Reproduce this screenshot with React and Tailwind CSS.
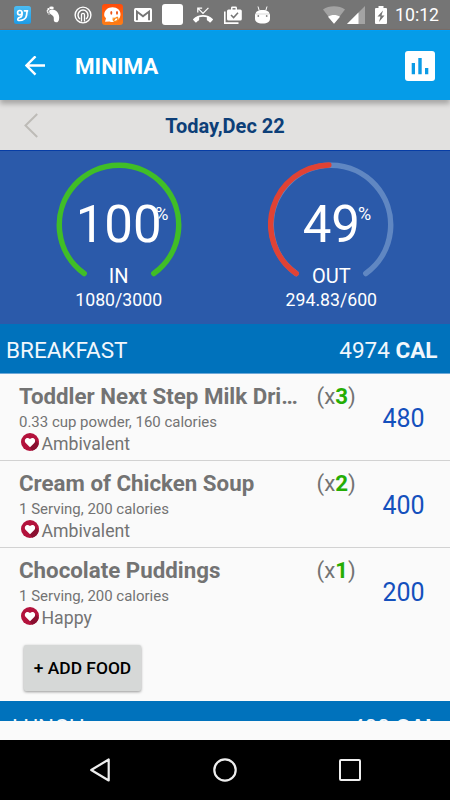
import React from "react";

const cell = "flex w-[30px] shrink-0 items-center justify-center";

function StatusBar() {
  return (
    <div className="flex h-[30px] shrink-0 items-center border-b border-[#7b6c66] bg-[#757575] pl-[7.5px] pr-[10px] text-white">
      <div className={cell}>
        <svg width="17" height="18" viewBox="0 0 17 18">
          <defs>
            <linearGradient id="sky" x1="0" y1="0" x2="0" y2="1">
              <stop offset="0" stopColor="#4cbcf3" />
              <stop offset="1" stopColor="#1c9be6" />
            </linearGradient>
          </defs>
          <rect width="17" height="18" rx="2.5" fill="url(#sky)" />
          <g fill="none" stroke="#fff" strokeWidth="1.7" strokeLinecap="round">
            <circle cx="5.800" cy="6.700" r="2.200" />
            <path d="M8 6.500c.3 3-.2 4.500-2 4.800-2.500.5-3.300 3.200-.5 3.200 3.500 0 6.500-2 7-5l.6-4.500" />
            <path d="M10.500 4.800h3" />
          </g>
        </svg>
      </div>
      <div className={cell}>
        <svg width="14" height="18" viewBox="0 0 14 18" fill="#fff">
          <path d="M3.500 4.300C6 2.800 9.500 3.500 11.300 6c1.600 2.300 2.300 4.500 1.700 7.500-.4 2-1.400 3-2.900 2.800-1.900-.2-2.500-1.600-2.300-3.300.2-2-.6-3-2-3.900C3.800 7.900 2.300 6 3.500 4.300z" />
          <ellipse cx="5.500" cy="1.900" rx="2.300" ry="1.300" />
          <circle cx="2.400" cy="3.200" r="1.100" />
          <circle cx="1.500" cy="4.900" r=".9" />
          <circle cx="1.900" cy="6.600" r=".8" />
          <circle cx="3" cy="8" r=".7" />
        </svg>
      </div>
      <div className={cell}>
        <svg width="18" height="18" viewBox="0 0 18 18" fill="none" stroke="#fff">
          <circle cx="9" cy="9" r="7.900" strokeWidth="1.400" />
          <path d="M6 13A5 5 0 1 1 12 13" strokeWidth="1.500" />
          <path d="M7.500 15.500V8.800a1.500 1.500 0 0 1 3 0v6.700" strokeWidth="1.300" />
        </svg>
      </div>
      <div className={cell}>
        <svg width="21" height="21" viewBox="0 0 21 21">
          <defs>
            <linearGradient id="ember" x1="0" y1="0" x2="0" y2="1">
              <stop offset="0" stopColor="#ff4a0a" />
              <stop offset="1" stopColor="#ff7f16" />
            </linearGradient>
          </defs>
          <rect width="21" height="21" rx="3" fill="url(#ember)" />
          <path d="M10.500 3.200c4.800 0 8 2.900 8 7.100 0 4.300-3.300 7.700-8 7.700-1 0-2-.2-3-.6l-4.500.4 1-3.500C2.800 13 2 12 2.200 10.300c.4-4.300 3.800-7.100 8.300-7.100z" fill="#fff" />
          <ellipse cx="9.300" cy="8.800" rx="1" ry="1.900" fill="#ef5515" />
          <ellipse cx="15" cy="8.800" rx="1" ry="1.900" fill="#ef5515" />
          <path d="M10.500 14c1.500.6 3.500.3 4.700-.7 1.200.8.900 2.700-.3 3.600-1.400 1-3.600.4-3.800-1.200l2-.3" fill="none" stroke="#ff8a16" strokeWidth="1.300" />
        </svg>
      </div>
      <div className={cell}>
        <svg width="18" height="14" viewBox="0 0 18 14">
          <rect width="18" height="14" rx="1.700" fill="#fff" />
          <path d="M2 1.800 9 7l7-5.200v10.400h-1.900V5.600L9 9.500 3.900 5.600v6.600H2z" fill="#757575" />
        </svg>
      </div>
      <div className={cell}>
        <div className="h-[21px] w-[21px] rounded-[3px] bg-white" />
      </div>
      <div className={cell}>
        <svg width="20" height="20" viewBox="0 0 24 24" fill="#fff">
          <path d="M6.500 5.500L12 11l7-7-1-1-6 6-4.500-4.500H11V3H5v6h1.500V5.500zm17.210 11.170C20.660 13.780 16.540 12 12 12S3.340 13.780.290 16.670c-.180.180-.290.430-.290.710s.110.530.290.710l2.480 2.480c.180.180.430.290.710.290.270 0 .520-.110.700-.280.790-.740 1.690-1.360 2.660-1.850.330-.160.560-.500.560-.900v-3.100C8.850 14.250 10.400 14 12 14s3.150.250 4.600.720v3.100c0 .390.230.740.560.900.980.490 1.870 1.120 2.670 1.850.180.180.430.280.700.280.280 0 .530-.110.710-.290l2.480-2.480c.180-.180.290-.430.290-.710s-.120-.520-.300-.700z" />
        </svg>
      </div>
      <div className={cell}>
        <svg width="18" height="18" viewBox="0 0 18 18">
          <path d="M3 5a1.500 1.500 0 0 1 1.500-1.500H7V2a1.400 1.400 0 0 1 1.400-1.400h3.200A1.400 1.400 0 0 1 13 2v1.500h3.300A1.500 1.500 0 0 1 17.800 5v8a1.500 1.500 0 0 1-1.500 1.500H4.500A1.500 1.500 0 0 1 3 13z" fill="#fff" />
          <path d="M8.500 3.500V2.100h3v1.400z" fill="#757575" />
          <path d="M7 9l2.600 2.600L14 6.800" fill="none" stroke="#757575" strokeWidth="1.500" />
          <path d="M.8 5.500v11.600H14.500" fill="none" stroke="#fff" strokeWidth="1.600" />
        </svg>
      </div>
      <div className={cell}>
        <svg width="15" height="18" viewBox="0 0 15 18">
          <path d="M3 .5l1.200 4M12 .5l-1.200 4" stroke="#fff" strokeWidth="1" />
          <path d="M.5 8.500C.5 5.500 3 4 7.500 4s7 1.500 7 4.500z" fill="#fff" />
          <path d="M0 8h15v4.500c0 3.500-2.500 5-7.500 5S0 16 0 12.500z" fill="#fff" />
          <circle cx="3.300" cy="10" r=".9" fill="#858585" />
          <circle cx="11.700" cy="10" r=".9" fill="#858585" />
          <path d="M0 8h15" stroke="#c8c8c8" strokeWidth=".7" />
        </svg>
      </div>
      <div className="ml-auto flex items-center">
        <svg width="22" height="18" viewBox="0 0 22 18">
          <path d="M11 17.800 0 3.500C6 -.8 16 -.8 22 3.500z" fill="#a3a3a3" />
          <path d="M11 17.800 5 10.800c3.500-2.300 8.500-2.300 12 0z" fill="#fff" />
        </svg>
        <svg className="ml-[2px]" width="18" height="18" viewBox="0 0 18 18">
          <path d="M0 18 18 0v18z" fill="#a3a3a3" />
          <path d="M0 18 11.500 6.500V18z" fill="#fff" />
        </svg>
        <svg className="ml-[10px]" width="12" height="18" viewBox="0 0 12 18">
          <path d="M1 2h2.500V0h5v2H11a1 1 0 0 1 1 1v14a1 1 0 0 1-1 1H1a1 1 0 0 1-1-1V3a1 1 0 0 1 1-1z" fill="#fff" />
          <path d="M8 4.500 2.500 10.500h3l-1.500 5.500 5.500-6.500h-3z" fill="#757575" />
        </svg>
        <div className="ml-[8px] w-[45px] whitespace-nowrap pt-[1px] text-[17.700px] leading-[30px]">10:12</div>
      </div>
    </div>
  );
}

function Dial({ color, value, label, detail, arc, track, unitShift }) {
  return (
    <div className="relative flex h-[173px] w-[126px] flex-col items-center text-white">
      <svg className="absolute left-0 top-[11px]" width="126" height="126" viewBox="0 0 126 126" fill="none" strokeWidth="5.500" strokeLinecap="round">
        {track && <path d="M28.200 111.500A59.700 59.700 0 1 1 97.800 111.500" stroke="#6087c2" />}
        <path d={arc} stroke={color} />
      </svg>
      <div className="relative mt-[44px] flex h-[60px] items-center text-[51px] leading-[60px]">
        <span>{value}</span>
        <span className={"absolute left-full top-[5px] text-[18px] leading-[28px] " + unitShift}>%</span>
      </div>
      <div className="mt-[9px] text-[20px] leading-[24px]">{label}</div>
      <div className="-mt-px whitespace-nowrap text-[17.700px] leading-[26px]">{detail}</div>
    </div>
  );
}

function Heart() {
  return (
    <svg width="18" height="18" viewBox="0 0 18 18">
      <circle cx="9" cy="9" r="9" fill="#b3123c" />
      <path d="M13.500 6.500 17.800 10.500A9 9 0 0 1 11 17.800L8 13z" fill="#8a0f30" />
      <path d="M9 14.200 4.500 9.800C2.400 6.800 5.700 3 9 6c3.300-3 6.600.8 4.500 3.800z" fill="#fff" />
    </svg>
  );
}

function Food({ name, count, serving, mood, cal, last }) {
  return (
    <div className={"flex h-[87px] pl-[19px] " + (last ? "" : "border-b border-[#d2d2d2]")}>
      <div className="w-[297.500px] pt-[8px] text-[#737373]">
        <div className="whitespace-nowrap text-[22.300px] font-bold leading-[28px]">{name}</div>
        <div className="pt-px text-[14.980px] leading-[22px]">{serving}</div>
        <div className="flex items-center pl-[2px] text-[17.700px] leading-[22px]">
          <div className="-mt-[4px] mr-[2.500px]">
            <Heart />
          </div>
          {mood}
        </div>
      </div>
      <div className="w-[66px] pt-[8px] text-[22.300px] leading-[28px] text-[#737373]">
        (x<b className="text-[#25ad04]">{count}</b>)
      </div>
      <div className="pt-[30px] text-[25px] leading-[30px] text-[#1450bd]">{cal}</div>
    </div>
  );
}

export default function App() {
  return (
    <div className="flex h-[800px] w-[450px] flex-col overflow-hidden bg-[#fafafa] font-['Roboto',sans-serif]">
      <StatusBar />
      <header className="relative z-10 flex h-[70px] shrink-0 items-center border-t border-[#009ff5] bg-[#059ce8] pl-[25px] pr-[15px] shadow-[0_4px_5px_rgba(0,0,0,0.26)]">
        <svg width="20" height="20" viewBox="0 0 20 20" fill="none" stroke="#fff" strokeWidth="2.400">
          <path d="M20 9.500H1.500M10.500 .3 1.500 9.500l9 9.200" />
        </svg>
        <h1 className="ml-[30px] pt-[1px] text-[22.400px] font-bold leading-[30px] text-white">MINIMA</h1>
        <svg className="ml-auto" width="30" height="30" viewBox="0 0 30 30">
          <rect width="30" height="30" rx="3" fill="#fff" />
          <path d="M6.700 12h3.300v11.300H6.700zM13.300 7h3.400v16.300h-3.400zM20 17h3.300v6.300H20z" fill="#0b9be5" />
        </svg>
      </header>
      <div className="flex h-[50px] shrink-0 items-center bg-[#e2e1e0] pl-[24px]">
        <svg width="14" height="25" viewBox="0 0 14 25" fill="none" stroke="#bdbbb7" strokeWidth="2">
          <path d="M13.200 1 1.500 12.500 13.200 24" />
        </svg>
        <div className="w-[374px] pt-[1px] text-center text-[20px] font-bold leading-[30px] text-[#0d3f78]">Today,Dec 22</div>
      </div>
      <div className="flex h-[174px] shrink-0 justify-between border-t border-[#073da5] bg-[#2b5aaa] pl-[55.700px] pr-[55.700px]">
        <Dial color="#40be27" value="100" label="IN" detail="1080/3000" unitShift="-ml-[6.500px]" arc="M28.200 111.500A59.700 59.700 0 1 1 97.800 111.500" />
        <Dial color="#e04234" value="49" label="OUT" detail="294.83/600" unitShift="-ml-[2px]" track arc="M28.200 111.500A59.700 59.700 0 0 1 60.800 2.900" />
      </div>
      <div className="flex h-[50px] shrink-0 items-center justify-between border-b border-[#6ea9d8] bg-[#0072bc] pl-[6px] pr-[12.500px] pt-[2px] text-[22.500px] leading-[30px] text-[#f1f7fc]">
        <span>BREAKFAST</span>
        <span>
          4974 <b>CAL</b>
        </span>
      </div>
      <Food name="Toddler Next Step Milk Dri…" count="3" serving="0.33 cup powder, 160 calories" mood="Ambivalent" cal="480" />
      <Food name="Cream of Chicken Soup" count="2" serving="1 Serving, 200 calories" mood="Ambivalent" cal="400" />
      <Food name="Chocolate Puddings" count="1" serving="1 Serving, 200 calories" mood="Happy" cal="200" last />
      <div className="h-[66px] shrink-0 pl-[24px] pt-[10px]">
        <button className="flex h-[46px] w-[117px] items-center justify-center whitespace-nowrap rounded-[2px] bg-[#d6d8d7] text-[17.400px] font-medium text-black shadow-[0_1px_3px_rgba(0,0,0,0.4)]">
          + ADD FOOD
        </button>
      </div>
      <div className="h-[20px] shrink-0 overflow-hidden bg-[#0072bc]">
        <div className="flex justify-between pl-[12px] pr-[12.500px] pt-[11px] text-[22.500px] leading-[30px] text-[#f1f7fc]">
          <span>LUNCH</span>
          <span>
            400 <b>CAL</b>
          </span>
        </div>
      </div>
      <nav className="mt-auto flex h-[60px] shrink-0 items-center bg-black">
        <svg className="ml-[90px]" width="20" height="24" viewBox="0 0 20 24" fill="none" stroke="#eee" strokeWidth="2.200" strokeLinejoin="round">
          <path d="M18.700 1.500v21L1.200 12z" />
        </svg>
        <svg className="ml-[103px]" width="24" height="24" viewBox="0 0 24 24" fill="none" stroke="#eee" strokeWidth="2.200">
          <circle cx="12" cy="12" r="10.700" />
        </svg>
        <div className="ml-[102px] h-[22px] w-[22px] rounded-[2px] border-2 border-[#eee]" />
      </nav>
    </div>
  );
}
